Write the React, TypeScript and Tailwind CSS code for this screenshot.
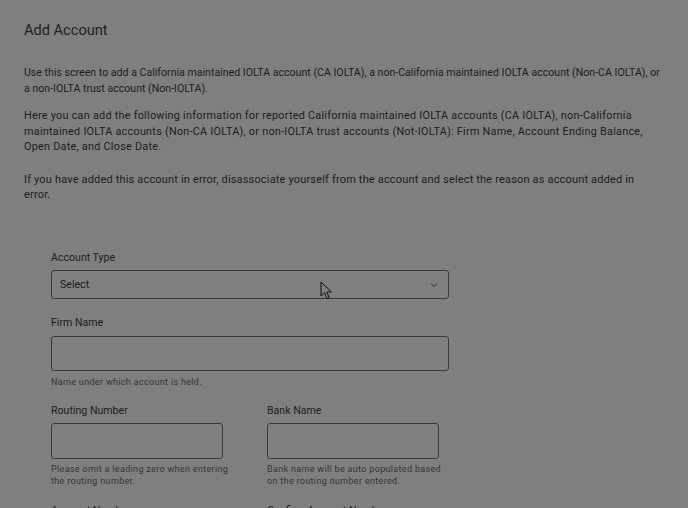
import React from "react";

function Chevron() {
  return (
    <svg width="10" height="10" viewBox="0 0 10 10" fill="none" className="text-[#2a2a2a]">
      <path d="M2 3.5 L5 6.5 L8 3.5" stroke="currentColor" strokeWidth="1" />
    </svg>
  );
}

function Cursor() {
  return (
    <svg width="14" height="20" viewBox="0 0 14 20" className="absolute left-[320px] top-[281px]">
      <path
        d="M1 1 L1 15 L4.5 11.8 L7 17.5 L9.2 16.5 L6.8 11 L11.5 11 Z"
        fill="#7f7f7f"
        stroke="#111111"
        strokeWidth="1"
        strokeLinejoin="round"
      />
    </svg>
  );
}

export default function App() {
  return (
    <div
      className="relative w-[688px] h-[508px] overflow-hidden bg-[#7f7f7f] text-[#1c1c1c]"
      style={{ fontFamily: "Roboto, 'Liberation Sans', sans-serif" }}
    >
      <div className="px-6 pt-[20px]">
        <h1 className="text-[14.6px] leading-[20px] font-normal text-[#1e1e1e]">Add Account</h1>
        <p className="mt-[25px] text-[10.6px] leading-[16px] w-[642px]">
          Use this screen to add a California maintained IOLTA account (CA IOLTA), a non-California maintained IOLTA account (Non-CA IOLTA), or a non-IOLTA trust account (Non-IOLTA).
        </p>
        <p className="mt-[11px] text-[10.8px] tracking-[0.27px] leading-[15.6px] w-[640px]">
          Here you can add the following information for reported California maintained IOLTA accounts (CA IOLTA), non-California maintained IOLTA accounts (Non-CA IOLTA), or non-IOLTA trust accounts (Not-IOLTA): Firm Name, Account Ending Balance, Open Date, and Close Date.
        </p>
        <p className="mt-[17px] text-[11px] tracking-[0.17px] leading-[15.6px] w-[620px]">
          If you have added this account in error, disassociate yourself from the account and select the reason as account added in error.
        </p>

        <div className="pl-[27px] mt-[47.5px]">
          <div className="w-[398px]">
            <label className="block text-[10.6px] leading-[16px]">Account Type</label>
            <div className="mt-[4px] h-[29px] rounded-[3px] border border-[#3a3a3a] flex items-center justify-between pl-[8px] pr-[9px]">
              <span className="text-[10.6px]">Select</span>
              <Chevron />
            </div>

            <label className="block mt-[16px] text-[10.6px] leading-[16px]">Firm Name</label>
            <div className="mt-[5px] h-[35px] rounded-[3px] border border-[#3a3a3a]" />
            <div className="mt-[5px] text-[9px] tracking-[0.33px] leading-[12px] text-[#353535]">
              Name under which account is held.
            </div>
          </div>

          <div className="mt-[15px] flex gap-[36px]">
            <div className="w-[180px]">
              <label className="block text-[10.6px] leading-[16px]">Routing Number</label>
              <div className="mt-[4px] w-[172px] h-[36px] rounded-[3px] border border-[#3a3a3a]" />
              <div className="mt-[4px] text-[9px] tracking-[0.33px] leading-[12px] text-[#353535]">
                Please omit a leading zero when entering the routing number.
              </div>
            </div>
            <div className="w-[180px]">
              <label className="block text-[10.6px] leading-[16px]">Bank Name</label>
              <div className="mt-[4px] w-[172px] h-[36px] rounded-[3px] border border-[#3a3a3a]" />
              <div className="mt-[4px] text-[9px] tracking-[0.33px] leading-[12px] text-[#353535]">
                Bank name will be auto populated based on the routing number entered.
              </div>
            </div>
          </div>

          <div className="mt-[16px] flex gap-[36px]">
            <label className="block w-[180px] text-[10.6px] leading-[16px]">Account Number</label>
            <label className="block w-[180px] text-[10.6px] leading-[16px]">Confirm Account Number</label>
          </div>
        </div>
      </div>
      <Cursor />
    </div>
  );
}
